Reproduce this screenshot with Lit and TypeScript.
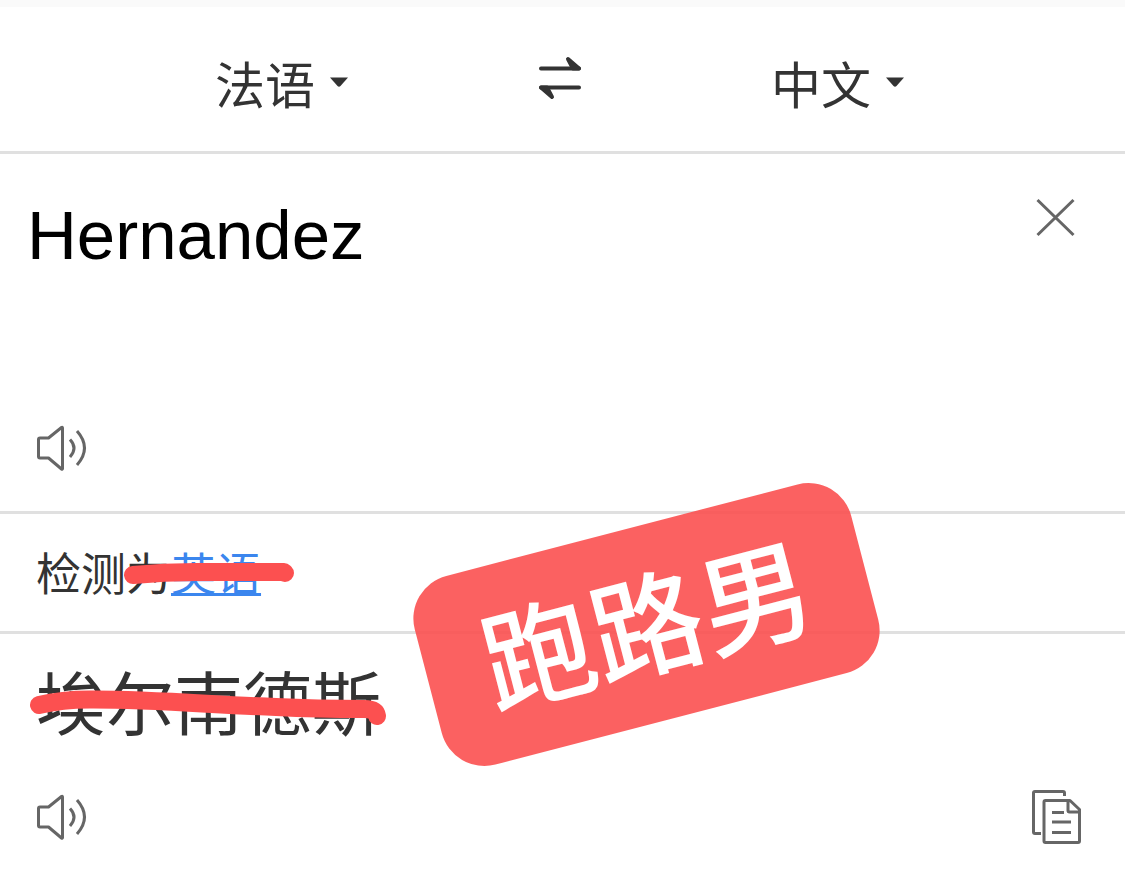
import { LitElement, html, svg, css } from "lit";
import { customElement, property, state } from "lit/decorators.js";

const speakerIcon = svg`
  <svg class="speaker" viewBox="0 0 52 48" width="52" height="48" aria-hidden="true">
    <path d="M2.500 15.500q0-1.500 1.500-1.500h8.500L25.500 3.500q1-.8 1 .5v40.500q0 1.300-1 .5L12.500 34H4q-1.500 0-1.500-1.500z" />
    <path d="M34 15.500q8 8.500 0 17.500M41 7q15 17 0 34" />
  </svg>`;

@customElement("language-picker")
export class LanguagePicker extends LitElement {
  static styles = css`
    :host { display: inline-block; }
    .picker { display: flex; align-items: center; gap: 14px; color: #333; }
    .select {
      appearance: none; border: 0; padding: 0; margin: 0; background: none;
      width: 2em; height: 72px; color: inherit; cursor: pointer;
      font: 50px/72px "Noto Sans CJK SC", sans-serif;
    }
    .caret { width: 20px; height: 10px; fill: #333; pointer-events: none; }
  `;

  @property() label = "";
  @property() value = "";
  @property({ attribute: false }) options: string[] = [];

  render() {
    return html`<label class="picker">
      <select class="select" aria-label=${this.label}>
        ${this.options.map((o) => html`<option ?selected=${o === this.value}>${o}</option>`)}
      </select>
      <svg class="caret" viewBox="0 0 20 10" aria-hidden="true"><path d="M1 .5h18L11.500 9q-1.500 1.300-3 0z" /></svg>
    </label>`;
  }
}

@customElement("app-root")
export class AppRoot extends LitElement {
  static styles = css`
    :host {
      display: block; background: #fff; color: #333;
      font-family: "Liberation Sans", "Noto Sans CJK SC", sans-serif;
    }
    .page { position: relative; overflow: hidden; border-top: 7px solid #fafafa; }
    .languages {
      display: grid; grid-template-columns: repeat(3, 1fr);
      align-items: center; justify-items: center;
      padding: 39px 148px 33px 143px; border-bottom: 3px solid #e0e0e0;
    }
    .icon-button { display: block; border: 0; padding: 0; background: none; cursor: pointer; }
    .icon-button svg { display: block; fill: none; stroke: #666; stroke-width: 3; stroke-linejoin: round; }
    .icon-button .swap { margin-bottom: 8px; stroke: #333; stroke-width: 4; stroke-linecap: round; }
    .icon-button .wedge { fill: #333; stroke-width: 4; }
    .source { padding: 42px 48px 39px 27px; border-bottom: 3px solid #e0e0e0; }
    .entry { display: flex; align-items: flex-start; }
    .text {
      flex: 1; min-width: 0; height: 228px; border: 0; padding: 0; resize: none; outline: none;
      background: none; color: #000; overflow: hidden;
      font: 69px/80px "Liberation Sans", Arial, sans-serif;
    }
    .tools { display: flex; justify-content: space-between; align-items: center; }
    .source .tools { padding-left: 9px; }
    .detected {
      padding: 26px 36px 27px; border-bottom: 3px solid #e0e0e0;
      font: 45px/64px "Noto Sans CJK SC", sans-serif;
    }
    .marked { position: relative; display: inline-block; vertical-align: top; white-space: nowrap; }
    .link {
      color: #3b86ee; text-decoration: underline;
      text-decoration-thickness: 3px; text-underline-offset: 2px;
    }
    .stroke {
      position: absolute; inset: 0; overflow: visible; pointer-events: none;
      fill: none; stroke: #fc5050; stroke-width: 18; stroke-linecap: round; stroke-linejoin: round;
    }
    .result { padding: 26px 44px 28px 36px; }
    .translation { margin: 0; height: 129px; font: 69px/80px "Noto Sans CJK SC", sans-serif; }
    .sticker {
      position: absolute; left: 421px; top: 520px; width: 451px; height: 195px;
      box-sizing: border-box; padding: 0 0 12px 0;
      display: flex; align-items: center; justify-content: center;
      border-radius: 44px; background: rgba(251, 80, 80, 0.9); color: #fff;
      font: 500 112px/160px "Noto Sans CJK SC", sans-serif;
      transform: rotate(-14.6deg);
    }
  `;

  @state() private source = "Hernandez";

  render() {
    return html`
      <main class="page">
        <header class="languages">
          <language-picker label="源语言" value="法语" .options=${["法语", "英语", "中文"]}></language-picker>
          <button class="icon-button" aria-label="交换语言">
            <svg class="swap" viewBox="0 0 44 44" width="44" height="44" aria-hidden="true">
              <path d="M3 12.500H41M41 31.500H3" />
              <path class="wedge" d="M30 3L41 12.500H35zM14 41L3 31.500H9z" />
            </svg>
          </button>
          <language-picker label="目标语言" value="中文" .options=${["中文", "英语", "法语"]}></language-picker>
        </header>

        <section class="source">
          <div class="entry">
            <textarea class="text" aria-label="原文" spellcheck="false" .value=${this.source}
              @input=${(e: Event) => (this.source = (e.target as HTMLTextAreaElement).value)}></textarea>
            <button class="icon-button" aria-label="清除" @click=${() => (this.source = "")}>
              <svg viewBox="0 0 44 44" width="44" height="44" aria-hidden="true">
                <path d="M4.500 4l36 35M40.500 4L4.500 39" />
              </svg>
            </button>
          </div>
          <div class="tools">
            <button class="icon-button" aria-label="朗读原文">${speakerIcon}</button>
          </div>
        </section>

        <section class="detected">
          <span class="marked">检测为<a class="link" href="#en">英语</a>
            <svg class="stroke" viewBox="0 0 225 64" width="225" height="64" aria-hidden="true">
              <path d="M97 35Q128 32 160 32H248L249 33" />
            </svg>
          </span>
        </section>

        <section class="result">
          <p class="translation">
            <span class="marked">埃尔南德斯
              <svg class="stroke" viewBox="0 0 345 80" width="345" height="80" aria-hidden="true">
                <path d="M3 45Q28 39 58 39.500C120 39.500 180 45 240 47C280 49 310 49 328 49Q340 49 341 56" />
              </svg>
            </span>
          </p>
          <div class="tools">
            <button class="icon-button" aria-label="朗读译文">${speakerIcon}</button>
            <button class="icon-button" aria-label="复制译文">
              <svg viewBox="0 0 50 56" width="50" height="56" aria-hidden="true">
                <path d="M33.500 7V4q0-1.500-1.500-1.500H4Q2.500 2.500 2.500 4v39q0 1.500 1.500 1.500h6" />
                <path d="M14.500 11.500H39L48.500 20.500V52q0 1.500-1.500 1.500H14.500Q13 53.500 13 52V13q0-1.500 1.500-1.500zM37 11.500v10q0 1.500 1.500 1.500h10M21 23.500h12M21 33h19M21 43.500h19" />
              </svg>
            </button>
          </div>
        </section>

        <aside class="sticker">跑路男</aside>
      </main>
    `;
  }
}
